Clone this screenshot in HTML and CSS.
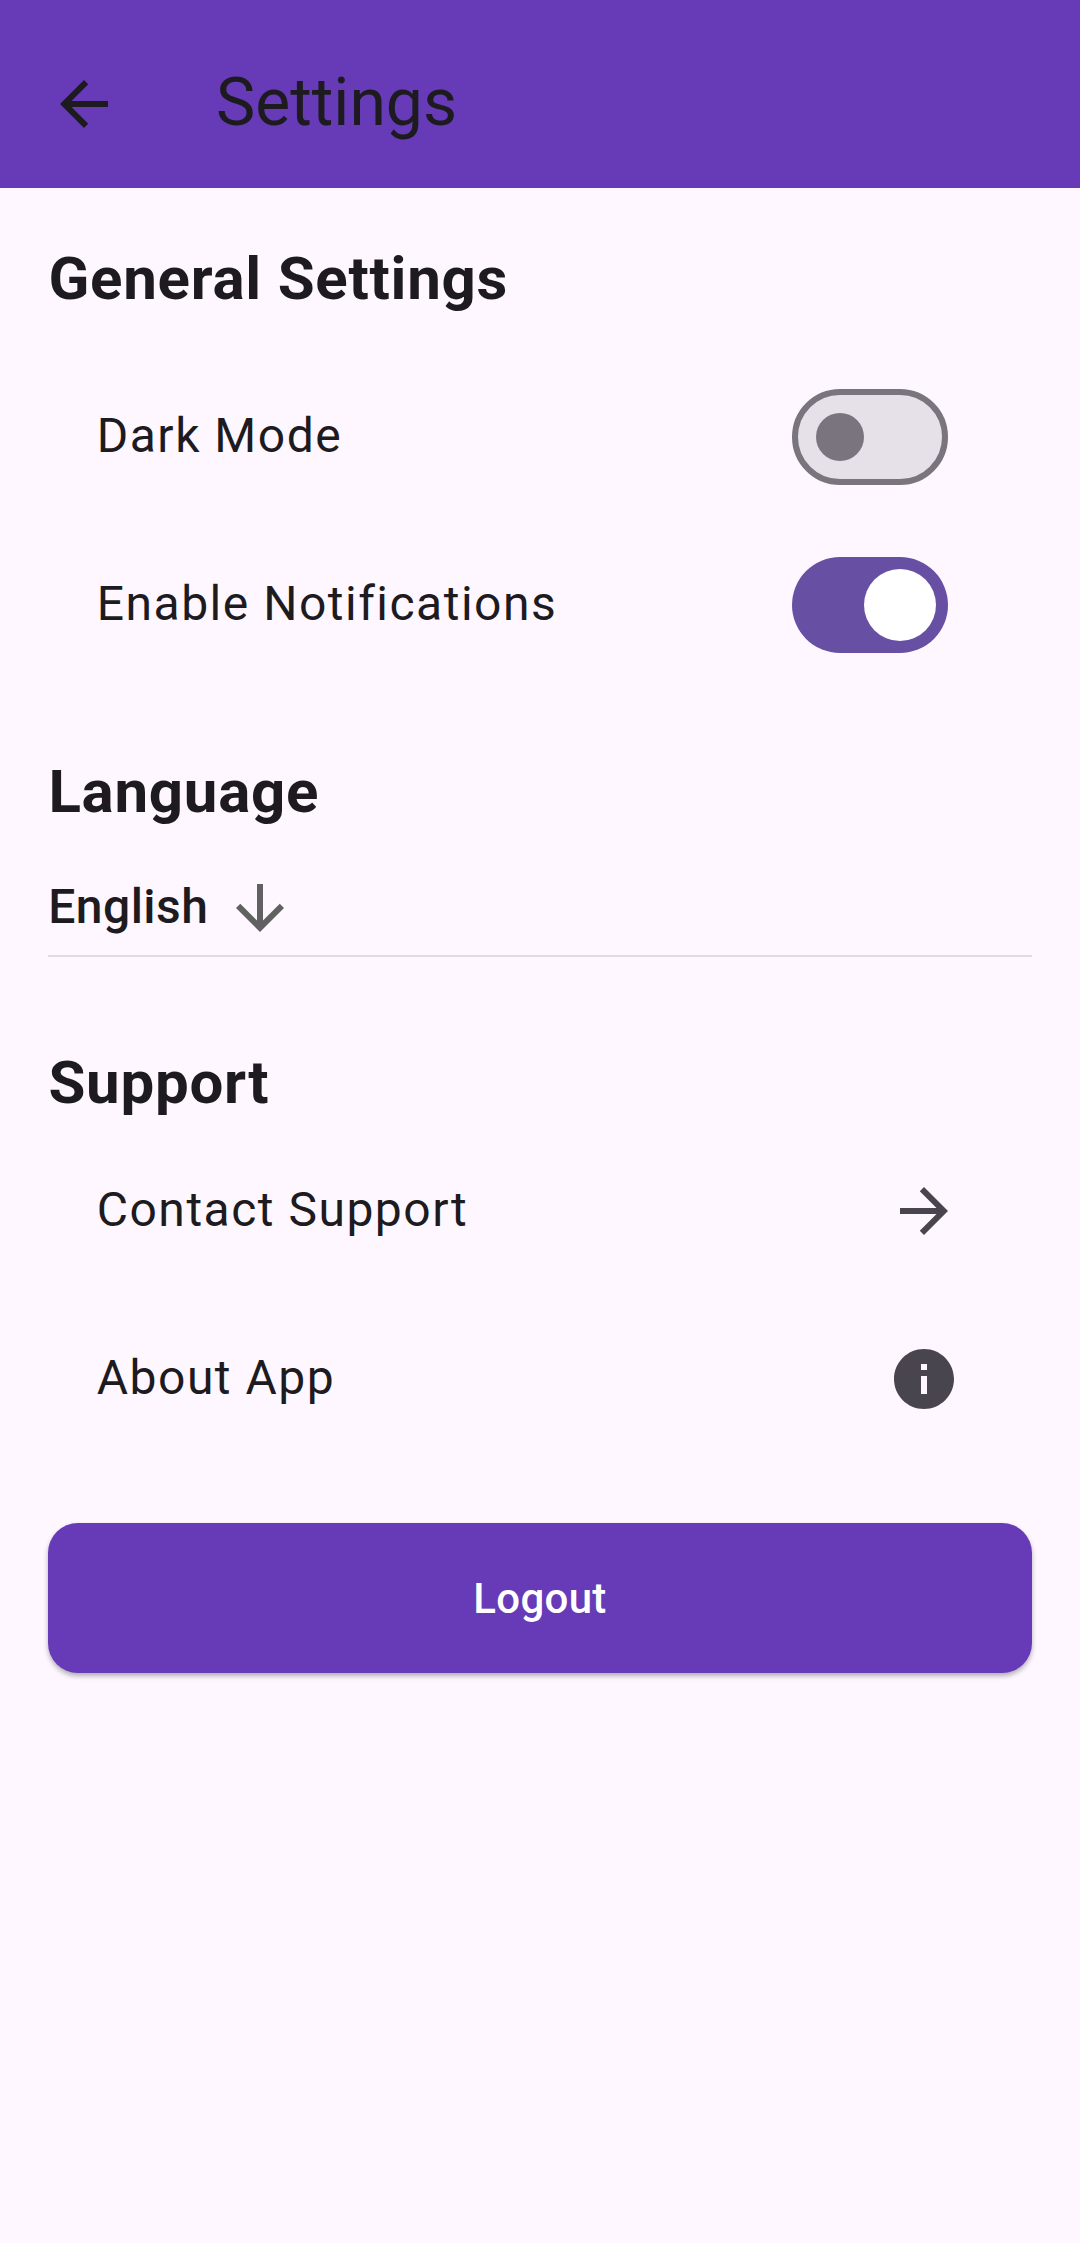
FILE: index.html
```html
<!DOCTYPE html>
<html lang="en">
<head>
  <meta charset="utf-8">
  <title>Settings</title>
  <link rel="stylesheet" href="styles.css">
</head>
<body>
  <header class="app-bar">
    <svg class="icon" viewBox="0 0 24 24"><path d="M20 11H7.83l5.59-5.59L12 4l-8 8 8 8 1.41-1.41L7.83 13H20v-2z"/></svg>
    <h1 class="app-title">Settings</h1>
  </header>
  <main class="content">
    <h2 class="heading">General Settings</h2>
    <div class="list list-general">
      <div class="row"><span class="label">Dark Mode</span><span class="switch"></span></div>
      <div class="row"><span class="label">Enable Notifications</span><span class="switch switch-on"></span></div>
    </div>
    <h2 class="heading">Language</h2>
    <div class="dropdown">
      <span class="dropdown-value">English</span>
      <svg class="icon icon-down" viewBox="0 0 24 24"><path d="M20 12l-1.41-1.41L13 16.17V4h-2v12.17l-5.58-5.59L4 12l8 8 8-8z"/></svg>
    </div>
    <h2 class="heading">Support</h2>
    <div class="list list-support">
      <div class="row"><span class="label">Contact Support</span><svg class="icon icon-trailing" viewBox="0 0 24 24"><path d="M12 4l-1.41 1.41L16.17 11H4v2h12.17l-5.58 5.59L12 20l8-8z"/></svg></div>
      <div class="row"><span class="label">About App</span><svg class="icon icon-trailing" viewBox="0 0 24 24"><path d="M12 2C6.48 2 2 6.48 2 12s4.48 10 10 10 10-4.48 10-10S17.52 2 12 2zm1 15h-2v-6h2v6zm0-8h-2V7h2v2z"/></svg></div>
    </div>
    <button class="logout">Logout</button>
  </main>
</body>
</html>
```
FILE: styles.css
```css
* {
  box-sizing: border-box;
}

body {
  margin: 0;
  min-height: 2243px;
  background: #fef7ff;
  color: #1d1b20;
  font-family: Roboto, sans-serif;
}

.app-bar {
  display: flex;
  align-items: center;
  gap: 96px;
  height: 188px;
  padding: 20px 48px 0;
  background: #673ab7;
}

.icon {
  display: block;
  flex: none;
  width: 72px;
  height: 72px;
  fill: #1d1b20;
}

.app-title {
  margin: 0;
  padding-bottom: 2px;
  font-size: 66px;
  font-weight: 400;
  line-height: 84px;
}

.content {
  padding: 48px 48px 0;
}

.heading {
  margin: 0;
  padding-left: 0.4px;
  font-size: 60px;
  font-weight: 700;
  line-height: 86px;
  letter-spacing: 0.75px;
}

.list-general {
  margin: 31px 0 60px;
}

.list-support {
  margin: 1px 0 60px;
}

.row {
  display: flex;
  align-items: center;
  justify-content: space-between;
  height: 168px;
  padding: 0 72px 0 48px;
}

.label {
  padding: 0 0 2px 0.75px;
  font-size: 48px;
  line-height: 72px;
  letter-spacing: 1.5px;
}

.switch {
  display: flex;
  align-items: center;
  width: 156px;
  height: 96px;
  margin-right: 12px;
  padding: 0 18px;
  border: 6px solid #79747e;
  border-radius: 48px;
  background: #e6e0e9;
}

.switch::before {
  content: "";
  width: 48px;
  height: 48px;
  border-radius: 50%;
  background: #79747e;
}

.switch-on {
  justify-content: flex-end;
  padding: 0 12px;
  border: 0;
  background: #6750a4;
}

.switch-on::before {
  width: 72px;
  height: 72px;
  background: #fff;
}

.dropdown {
  display: flex;
  align-items: center;
  height: 122px;
  margin-bottom: 83px;
  padding-top: 26px;
  border-bottom: 2px solid #e0dae1;
}

.dropdown-value {
  padding: 0 0 2px 0.25px;
  font-size: 48px;
  font-weight: 500;
  line-height: 72px;
  letter-spacing: 0.45px;
}

.icon-down {
  margin-left: 15.6px;
  fill: #616161;
}

.icon-trailing {
  fill: #49454f;
}

.logout {
  display: block;
  width: 100%;
  height: 150px;
  padding: 2px 0 0;
  border: 0;
  border-radius: 30px;
  background: #673ab7;
  box-shadow: 0 3px 5px rgba(0, 0, 0, 0.3);
  color: #fff;
  font: 500 42px/60px Roboto, sans-serif;
  letter-spacing: 0.3px;
}
```
